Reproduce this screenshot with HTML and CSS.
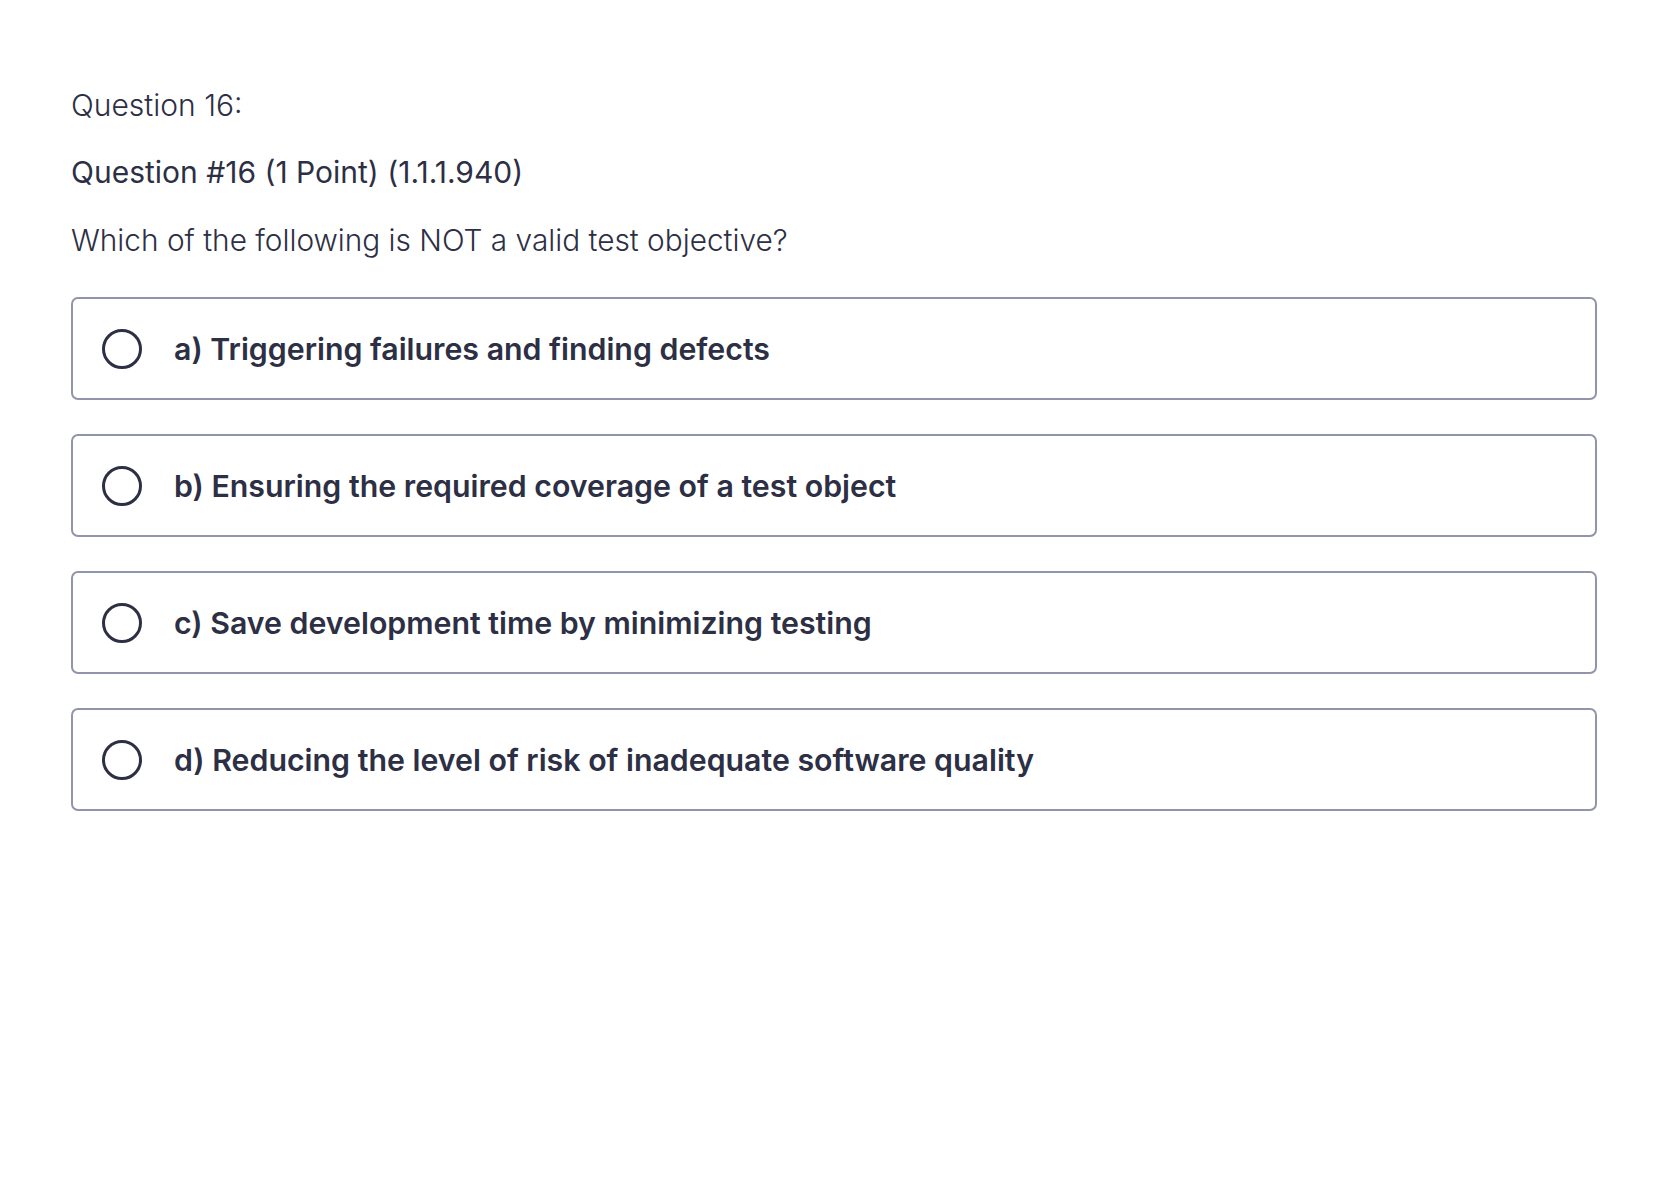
FILE: index.html
```html
<!DOCTYPE html>
<html lang="en">
<head>
    <meta charset="UTF-8">
    <meta name="viewport" content="width=device-width, initial-scale=1.0">
    <title>Question 16</title>
    <link rel="stylesheet" href="styles.css">
</head>
<body>
    <div class="quiz">
        <div class="q_title">Question 16:</div>
        <div class="q_code">Question #16 (1 Point) (1.1.1.940)</div>
        <div class="q_text">Which of the following is NOT a valid test objective?</div>

        <ul class="answers">
            <li><span class="radio"></span><span class="label">a) Triggering failures and finding defects</span></li>
            <li><span class="radio"></span><span class="label">b) Ensuring the required coverage of a test object</span></li>
            <li><span class="radio"></span><span class="label">c) Save development time by minimizing testing</span></li>
            <li><span class="radio"></span><span class="label">d) Reducing the level of risk of inadequate software quality</span></li>
        </ul>
    </div>
</body>
</html>
```
FILE: styles.css
```css
*{
    margin: 0;
    padding: 0;
    box-sizing: border-box;
}
body{
    background: #fff;
    font-family: Inter, "Noto Sans", sans-serif;
    color: #2d2f45;
}
.quiz{
    width: 1526px;
    margin-left: 71px;
    padding-top: 84px;
}
.q_title{
    font-size: 30px;
    font-weight: 300;
    line-height: 42px;
}
.q_code{
    font-size: 30px;
    font-weight: 400;
    line-height: 42px;
    margin-top: 25px;
}
.q_text{
    font-size: 29.8px;
    font-weight: 300;
    line-height: 42px;
    margin-top: 26px;
}
.answers{
    list-style: none;
    margin-top: 36px;
    display: flex;
    flex-direction: column;
    gap: 34px;
}
.answers li{
    height: 103px;
    border: 2px solid #9294aa;
    border-radius: 7px;
    display: flex;
    align-items: center;
    padding-left: 29px;
    cursor: pointer;
}
.radio{
    width: 40px;
    height: 40px;
    border: 3px solid #2d2f45;
    border-radius: 50%;
    flex-shrink: 0;
}
.label{
    margin-left: 32px;
    font-size: 30.3px;
    font-weight: 600;
}
```
